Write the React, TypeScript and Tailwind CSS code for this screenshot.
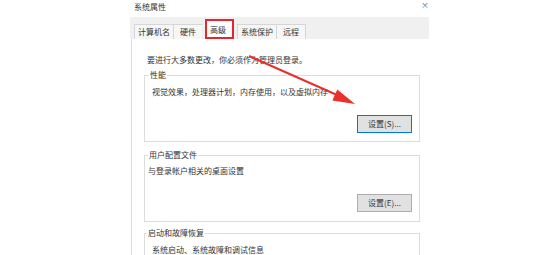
export default function App() {
  return (
    <div className="relative w-[544px] h-[255px] overflow-hidden bg-white text-[#333] text-[8px] leading-[10px] font-['Noto_Sans_CJK_SC','Noto_Sans',sans-serif]">
      <div className="ml-[128px] w-[301px] flex flex-col">
        {/* title bar */}
        <div className="relative h-[17px] pt-[2px] pl-[6px]">
          <span>系统属性</span>
          <span className="absolute right-[0px] top-[0px] text-[8px] leading-[10px] text-[#666]">×</span>
        </div>
        {/* tab strip */}
        <div className="ml-[2px] h-[22px] bg-[#f0f0f0] flex items-end pl-[4px]">
          <div className="w-[39px] h-[15px] border-l border-t border-[#d6d6d6] bg-[#f6f6f6] flex items-center justify-center">计算机名</div>
          <div className="w-[29px] h-[15px] border-l border-t border-[#d6d6d6] bg-[#f6f6f6] flex items-center justify-center">硬件</div>
          <div className="ml-[3px] mr-[3px] w-[29px] h-[20px] border-2 border-[#e5272d] bg-white flex items-start pt-[4px] pl-[3px]">高级</div>
          <div className="w-[39px] h-[15px] border-l border-t border-[#d6d6d6] bg-[#f6f6f6] flex items-center justify-center">系统保护</div>
          <div className="w-[30px] h-[15px] border-l border-t border-r border-[#d6d6d6] bg-[#f6f6f6] flex items-center justify-center">远程</div>
        </div>
        {/* panel */}
        <div className="ml-[3px] h-[216px] border-l border-[#dcdcdc] bg-white pl-[12px] pt-[16px] flex flex-col">
          <div className="pl-[3px] h-[10px]">要进行大多数更改，你必须作为管理员登录。</div>

          <div className="relative mt-[10px] w-[276px] h-[67px] shrink-0 border border-[#dcdcdc] flex flex-col">
            <span className="absolute top-[-6px] left-[4px] bg-white px-[1px]">性能</span>
            <div className="pt-[11px] pl-[7px] h-[21px]">视觉效果，处理器计划，内存使用，以及虚拟内存</div>
            <div className="mt-[18px] self-end mr-[7px] w-[55px] h-[18px] border border-[#0078d7] bg-[#e1e1e1] flex items-center justify-center">设置(S)...</div>
          </div>

          <div className="relative mt-[13px] w-[276px] h-[67px] shrink-0 border border-[#dcdcdc] flex flex-col">
            <span className="absolute top-[-6px] left-[3px] bg-white px-[1px]">用户配置文件</span>
            <div className="pt-[10px] pl-[3px] h-[20px]">与登录帐户相关的桌面设置</div>
            <div className="mt-[18px] self-end mr-[7px] w-[55px] h-[18px] border border-[#adadad] bg-[#e1e1e1] flex items-center justify-center">设置(E)...</div>
          </div>

          <div className="relative mt-[11px] w-[276px] h-[67px] shrink-0 border border-[#dcdcdc] flex flex-col">
            <span className="absolute top-[-6px] left-[2px] bg-white px-[1px]">启动和故障恢复</span>
            <div className="pt-[11px] pl-[7px] h-[21px]">系统启动、系统故障和调试信息</div>
          </div>
        </div>
      </div>
      {/* red arrow */}
      <svg className="absolute left-0 top-0 pointer-events-none" width="544" height="255" viewBox="0 0 544 255">
        <line x1="249" y1="56" x2="337" y2="95" stroke="#e8302c" strokeWidth="2" />
        <polygon points="355,104 332.4,100.5 337.3,89.5" fill="#e8302c" />
      </svg>
    </div>
  );
}
